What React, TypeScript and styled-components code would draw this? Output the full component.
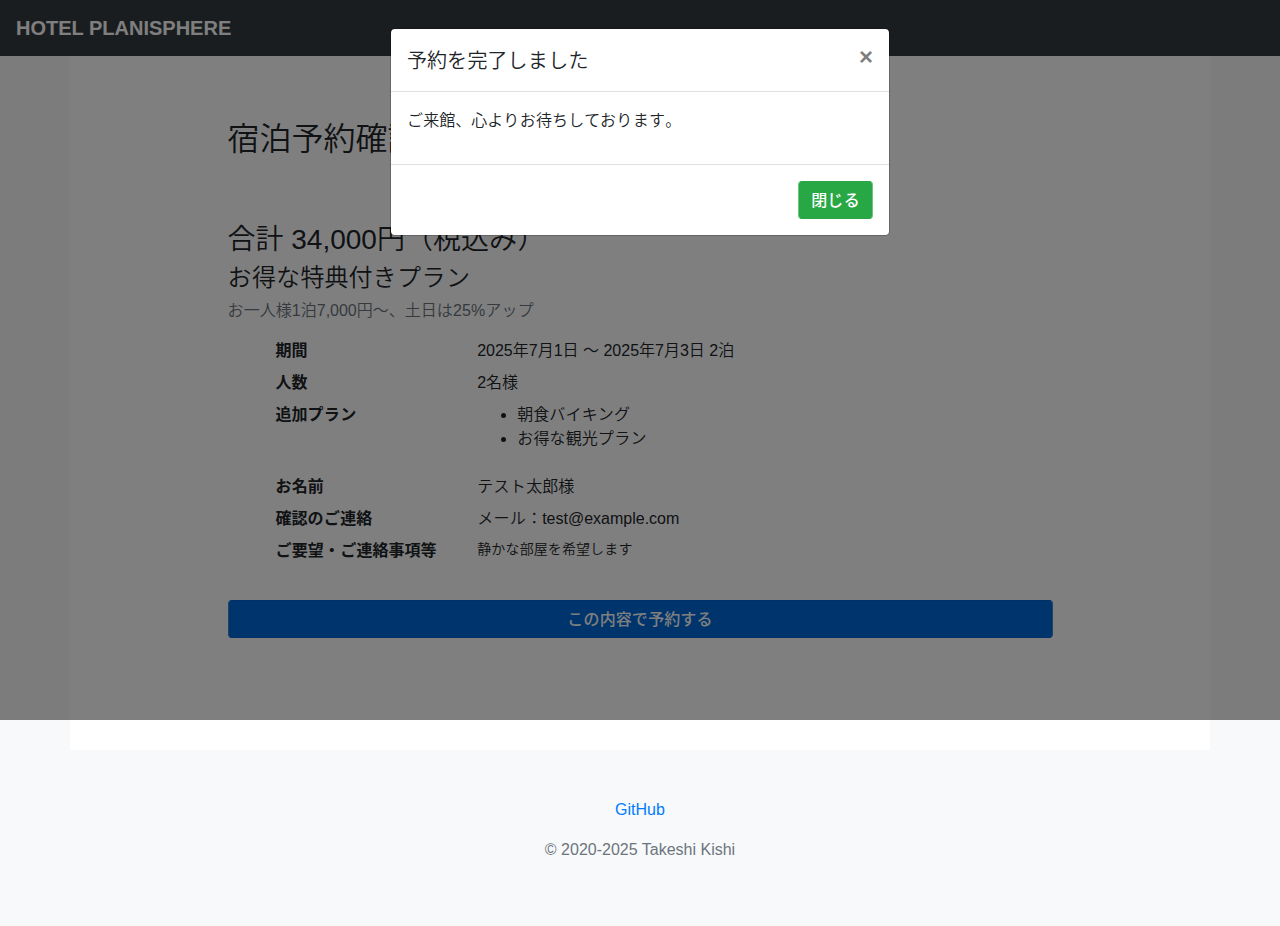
import React from "react";
import styled, { createGlobalStyle } from "styled-components";

const Global = createGlobalStyle`
  *, *::before, *::after { box-sizing: border-box; }
  html { background: #f8f9fa; }
  body {
    margin: 0;
    font-family: "Liberation Sans", "Noto Sans CJK JP", sans-serif;
    font-size: 16px;
    font-weight: 350;
    line-height: 1.5;
    color: #212529;
    background: #f8f9fa;
  }
`;

const Navbar = styled.nav`
  height: 56px;
  padding: 8px 16px;
  background: #343a40;
`;

const Brand = styled.span`
  display: inline-block;
  padding: 5px 0;
  font-size: 20px;
  line-height: 30px;
  font-weight: 700;
  color: #fff;
  white-space: nowrap;
`;

const Container = styled.main`
  width: 1140px;
  height: 694px;
  margin: 0 auto;
  padding: 64px 157.5px 0;
  background: #fff;
`;

const Title = styled.h2`
  margin: 0;
  font-size: 32px;
  font-weight: 350;
  line-height: 39px;
`;

const Total = styled.h3`
  margin: 63px 0 6px;
  padding-top: 1px;
  font-size: 28px;
  font-weight: 350;
  line-height: 34px;
`;

const PlanName = styled.h4`
  margin: 0 0 7px;
  font-size: 24px;
  font-weight: 350;
  line-height: 29px;
`;

const Muted = styled.p`
  margin: 0 0 16px;
  color: #6c757d;
`;

const Details = styled.dl`
  display: grid;
  grid-template-columns: 201.67px 1fr;
  margin: 0 0 29px;
  padding-left: 48px;
`;

const Term = styled.dt`
  font-weight: 700;
`;

const Value = styled.dd<{ $small?: boolean }>`
  margin: 0 0 8px;
  font-size: ${(p) => (p.$small ? "14px" : "16px")};
  line-height: ${(p) => (p.$small ? "20px" : "24px")};
  min-height: 24px;
`;

const Plans = styled.ul`
  margin: 0 0 16px;
  padding-left: 40px;
`;

const Kana = styled.span`
  letter-spacing: 0.02em;
`;

const variants = {
  primary: { fill: "#0069d9", border: "#0062cc", side: "#3f84cf" },
  success: { fill: "#28a745", border: "#28a745", side: "#6cc480" },
};

const Button = styled.button<{ $variant: keyof typeof variants; $block?: boolean }>`
  display: block;
  width: ${(p) => (p.$block ? "100%" : "auto")};
  height: 38px;
  padding: 7px 12px 5px;
  border: 1px solid ${(p) => variants[p.$variant].border};
  border-left-color: ${(p) => variants[p.$variant].side};
  border-right-color: ${(p) => variants[p.$variant].side};
  border-radius: 4px;
  background: ${(p) => variants[p.$variant].fill};
  color: #fff;
  font: inherit;
  font-weight: 500;
`;

const Footer = styled.footer`
  height: 176px;
  padding-top: 48px;
  text-align: center;
  color: #6c757d;

  p { margin: 0 0 16px; }
  a { color: #007bff; text-decoration: none; }
`;

const Backdrop = styled.div`
  position: absolute;
  top: 0;
  left: 0;
  width: 100%;
  height: 720px;
  background: rgba(0, 0, 0, 0.5);
`;

const Dialog = styled.div`
  position: absolute;
  top: 28px;
  left: 390px;
  width: 500px;
  border: 1px solid rgba(0, 0, 0, 0.2);
  border-radius: 4.8px;
  background: #fff;
  background-clip: padding-box;
`;

const DialogHeader = styled.div`
  display: flex;
  justify-content: space-between;
  align-items: flex-start;
  height: 63px;
  padding: 16px;
  border-bottom: 1px solid #dee2e6;
`;

const DialogTitle = styled.h5`
  margin: 0;
  font-size: 20px;
  font-weight: 350;
  line-height: 32px;
`;

const Close = styled.button`
  margin: -16px -16px -16px auto;
  padding: 16px;
  border: 0;
  background: transparent;
  font: 700 24px/24px "Liberation Sans", sans-serif;
  color: #000;
  opacity: 0.5;
`;

const DialogBody = styled.div`
  padding: 17px 16px 15px;
  p { margin: 0 0 16px; }
`;

const DialogFooter = styled.div`
  display: flex;
  justify-content: flex-end;
  padding: 16px;
  border-top: 1px solid #dee2e6;
`;

// Sets kana slightly looser than the kanji and Latin around it.
function Ja({ children }: { children: string }) {
  return (
    <>
      {children
        .split(/([\u3041-\u30ff]+)/)
        .map((run, i) => (i % 2 ? <Kana key={i}>{run}</Kana> : run))}
    </>
  );
}

export default function App() {
  return (
    <>
      <Global />
      <Navbar>
        <Brand>HOTEL PLANISPHERE</Brand>
      </Navbar>
      <Container lang="ja">
        <Title>宿泊予約確認</Title>
        <Total><Ja>合計 34,000円（税込み）</Ja></Total>
        <PlanName><Ja>お得な特典付きプラン</Ja></PlanName>
        <Muted><Ja>お一人様1泊7,000円〜、土日は25%アップ</Ja></Muted>
        <Details>
          <Term>期間</Term>
          <Value>2025年7月1日 〜 2025年7月3日 2泊</Value>
          <Term>人数</Term>
          <Value>2名様</Value>
          <Term><Ja>追加プラン</Ja></Term>
          <Value>
            <Plans>
              <li><Ja>朝食バイキング</Ja></li>
              <li><Ja>お得な観光プラン</Ja></li>
            </Plans>
          </Value>
          <Term><Ja>お名前</Ja></Term>
          <Value><Ja>テスト太郎様</Ja></Value>
          <Term><Ja>確認のご連絡</Ja></Term>
          <Value><Ja>メール：test@example.com</Ja></Value>
          <Term><Ja>ご要望・ご連絡事項等</Ja></Term>
          <Value $small><Ja>静かな部屋を希望します</Ja></Value>
        </Details>
        <Button $variant="primary" $block><Ja>この内容で予約する</Ja></Button>
      </Container>
      <Footer>
        <p><a href="#">GitHub</a></p>
        <p>© 2020-2025 Takeshi Kishi</p>
      </Footer>
      <Backdrop />
      <Dialog role="dialog" lang="ja">
        <DialogHeader>
          <DialogTitle><Ja>予約を完了しました</Ja></DialogTitle>
          <Close aria-label="Close">×</Close>
        </DialogHeader>
        <DialogBody>
          <p><Ja>ご来館、心よりお待ちしております。</Ja></p>
        </DialogBody>
        <DialogFooter>
          <Button $variant="success"><Ja>閉じる</Ja></Button>
        </DialogFooter>
      </Dialog>
    </>
  );
}
